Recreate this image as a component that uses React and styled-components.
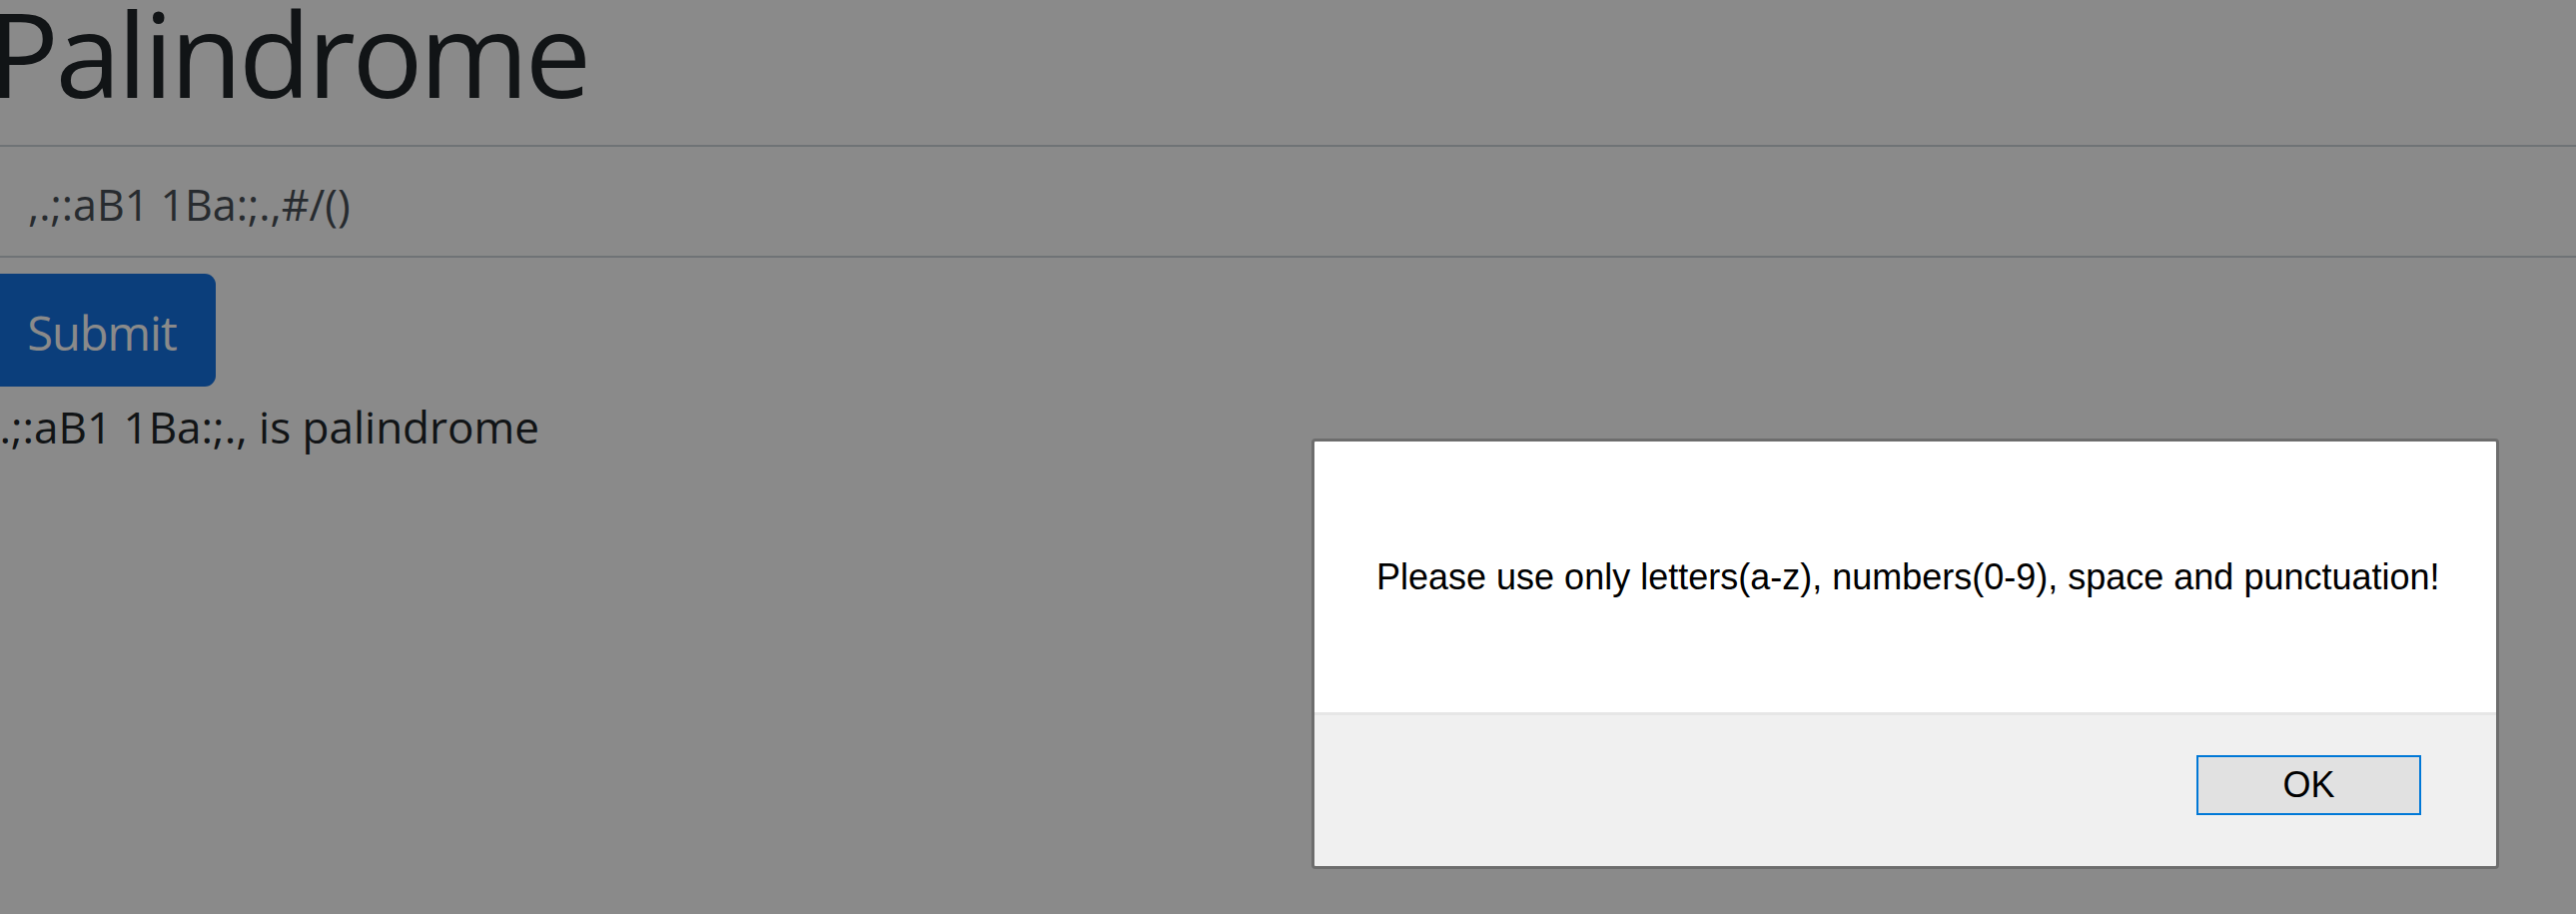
import React, { useState } from 'react';
import styled, { createGlobalStyle } from 'styled-components';

const GlobalStyle = createGlobalStyle`
  html, body {
    margin: 0;
    padding: 0;
    background: #ffffff;
    overflow: hidden;
  }
  body {
    font-family: 'Open Sans', 'Noto Sans', sans-serif;
    color: #212529;
  }
`;

// page under the alert
const Page = styled.main`
  width: 2640px;
  margin-left: -12px;
  padding-top: 3px;
  display: flex;
  flex-direction: column;
  align-items: flex-start;
`;

const Title = styled.h1`
  margin: 0 0 42px;
  font-size: 118px;
  font-weight: 400;
  line-height: 100px;
  color: #212529;
  letter-spacing: -3.5px;
`;

const TextInput = styled.input`
  box-sizing: border-box;
  width: 100%;
  height: 113px;
  margin: 0 0 16px;
  padding: 6px 38px 0;
  border: 2px solid #ced4da;
  font-family: 'Open Sans', 'Noto Sans', sans-serif;
  font-size: 43px;
  color: #495057;
  background: #ffffff;
  outline: none;
`;

const SubmitButton = styled.button`
  box-sizing: border-box;
  width: 228px;
  height: 113px;
  padding: 4px 0 0;
  border: none;
  border-radius: 11px;
  background: #1573e3;
  color: #ffffff;
  font-family: 'Open Sans', 'Noto Sans', sans-serif;
  font-size: 47px;
  letter-spacing: -1px;
`;

const Result = styled.p`
  margin: 10px 0 0;
  font-size: 44px;
  line-height: 60px;
  color: #212529;
`;

// modal layer
const Overlay = styled.div`
  position: fixed;
  inset: 0;
  background: rgba(0, 0, 0, 0.46);
`;

const Dialog = styled.div`
  position: fixed;
  left: 1313px;
  top: 439px;
  width: 1189px;
  box-sizing: border-box;
  border: 3px solid #6d6d6d;
  border-radius: 4px;
  overflow: hidden;
  font-family: 'Liberation Sans', Arial, sans-serif;
  color: #000000;
`;

const DialogBody = styled.div`
  height: 271px;
  padding: 0 30px 0 62px;
  display: flex;
  align-items: center;
  background: #ffffff;
  border-bottom: 3px solid #e6e6e6;
  font-size: 36px;
  white-space: nowrap;
`;

const DialogFooter = styled.div`
  height: 151px;
  box-sizing: border-box;
  padding: 40px 75px 0 0;
  display: flex;
  justify-content: flex-end;
  align-items: flex-start;
  background: #f0f0f0;
`;

const OkButton = styled.button`
  box-sizing: border-box;
  width: 225px;
  height: 60px;
  border: 2px solid #0078d7;
  background: #e1e1e1;
  font-family: 'Liberation Sans', Arial, sans-serif;
  font-size: 36px;
  color: #000000;
  padding: 0;
`;

export default function App() {
  const [value] = useState(',.;:aB1 1Ba:;.,#/()');

  return (
    <>
      <GlobalStyle />
      <Page>
        <Title>Palindrome</Title>
        <TextInput type="text" defaultValue={value} />
        <SubmitButton type="button">Submit</SubmitButton>
        <Result>,.;:aB1 1Ba:;., is palindrome</Result>
      </Page>
      <Overlay />
      <Dialog role="alertdialog">
        <DialogBody>Please use only letters(a-z), numbers(0-9), space and punctuation!</DialogBody>
        <DialogFooter>
          <OkButton type="button">OK</OkButton>
        </DialogFooter>
      </Dialog>
    </>
  );
}
